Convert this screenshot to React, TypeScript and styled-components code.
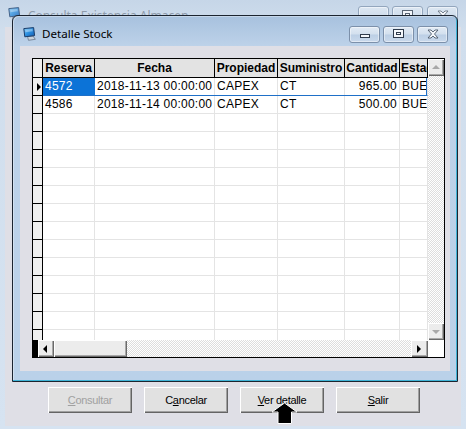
import React from 'react';
import styled, { createGlobalStyle } from 'styled-components';

const GlobalStyle = createGlobalStyle`
  html, body { margin: 0; padding: 0; background: #d3e0ee; }
  #root { width: 466px; height: 429px; }
`;

const Desktop = styled.div`
  position: relative;
  width: 466px;
  height: 429px;
  overflow: hidden;
  font-family: "Liberation Sans", Arial, sans-serif;
`;

/* ---------- background window ---------- */
const BackWindow = styled.div`
  display: flex;
  flex-direction: column;
  width: 100%;
  height: 100%;
  box-sizing: border-box;
  padding: 0 5px 3px 5px;
  background: linear-gradient(to bottom, #c6d6e8 0px, #d0deed 30px, #d6e3f1 100%);
`;

const BackTitleBar = styled.div`
  height: 27px;
  flex-shrink: 0;
  display: flex;
  align-items: flex-start;
  box-sizing: border-box;
  padding: 6px 3px 0 3px;
`;

const BackIcon = styled.div`
  margin-top: 1px;
  width: 13px;
  height: 13px;
  opacity: 0.75;
`;

const BackTitle = styled.div`
  margin-left: 7px;
  margin-top: 2px;
  font-family: "Noto Sans", "Open Sans", sans-serif;
  font-size: 12px;
  line-height: 16px;
  color: #8e9bab;
`;

const CaptionButtons = styled.div<{ $gap: number }>`
  margin-left: auto;
  display: flex;
  gap: ${p => p.$gap}px;
`;

const CaptionButton = styled.div<{ $faded?: boolean }>`
  width: 31px;
  height: 17px;
  box-sizing: border-box;
  border: 1px solid ${p => (p.$faded ? '#93a6bd' : '#7c90aa')};
  border-radius: 3px;
  display: flex;
  align-items: center;
  justify-content: center;
  background: ${p =>
    p.$faded
      ? 'linear-gradient(to bottom, #dde7f2 0%, #d2dfed 50%, #c6d6e8 51%, #cfdcec 100%)'
      : 'linear-gradient(to bottom, #e2ebf5 0%, #d3e0ee 48%, #bccfe5 52%, #c9d9ec 100%)'};
  box-shadow: inset 0 0 0 1px rgba(255, 255, 255, 0.45);
`;

const BackClient = styled.div`
  flex: 1;
  background: #dfdfe6;
  display: flex;
  align-items: flex-end;
  box-sizing: border-box;
  padding: 0 0 13px 43px;
`;

const ButtonRow = styled.div`
  display: flex;
  gap: 12px;
`;

const PushButton = styled.button<{ $disabled?: boolean }>`
  width: 84px;
  height: 26px;
  margin: 0;
  padding: 0 0 1px 0;
  border: none;
  background: #e1e1e1;
  box-shadow: inset 1px 1px 0 #ffffff, inset -1px -1px 0 #646464, inset -2px -2px 0 #a0a0a0;
  font-family: "Liberation Sans", Arial, sans-serif;
  font-size: 11px;
  letter-spacing: -0.3px;
  color: ${p => (p.$disabled ? '#a0a0a0' : '#000')};
  display: flex;
  align-items: center;
  justify-content: center;
  box-sizing: border-box;
  cursor: default;
  u { text-decoration: underline; text-underline-offset: 1px; }
`;

/* ---------- dialog ---------- */
const Dialog = styled.div`
  position: absolute;
  left: 12px;
  top: 15px;
  width: 446px;
  height: 367px;
  box-sizing: border-box;
  border: 1px solid #1b2430;
  border-radius: 6px 6px 0 0;
  padding: 0 7px 10px 7px;
  display: flex;
  flex-direction: column;
  background: linear-gradient(to bottom, #a7c1de 0px, #bdd2e9 30px, #bad1e9 100%);
  box-shadow: inset -1px -1px 0 #3fb3d6, inset 1px 1px 0 rgba(255, 255, 255, 0.35);
`;

const DialogTitleBar = styled.div`
  height: 30px;
  flex-shrink: 0;
  display: flex;
  align-items: center;
  box-sizing: border-box;
  padding: 6px 2px 0 3px;
`;

const DialogIcon = styled.div`
  width: 13px;
  height: 14px;
`;

const DialogTitle = styled.div`
  margin-left: 6px;
  font-family: "Noto Sans", "Open Sans", sans-serif;
  font-size: 11.6px;
  line-height: 16px;
  color: #000;
`;

const DialogClient = styled.div`
  flex: 1;
  background: #dfdfe6;
  box-sizing: border-box;
  padding: 12px 5px 13px 12px;
`;

/* ---------- data grid ---------- */
const DataGrid = styled.div`
  width: 413px;
  height: 300px;
  box-sizing: border-box;
  border: 1px solid #000;
  background: #fff;
  display: grid;
  grid-template-columns: 395px 16px;
  grid-template-rows: 281px 17px;
`;

const Viewport = styled.div`
  overflow: hidden;
`;

const Row = styled.div<{ $header?: boolean; $current?: boolean }>`
  position: relative;
  display: flex;
  width: 100%;
  height: ${p => (p.$header ? 19 : 18)}px;
  overflow: hidden;
  &::after {
    content: '';
    display: ${p => (p.$current ? 'block' : 'none')};
    position: absolute;
    left: 10px;
    top: 0;
    right: 1px;
    bottom: 0;
    border-right: 1px solid #1f70c8;
    border-bottom: 1px solid #1f70c8;
    pointer-events: none;
  }
`;

const Indicator = styled.div`
  flex-shrink: 0;
  width: 10px;
  box-sizing: border-box;
  background: #f0f0f0;
  border-right: 1px solid #000;
  border-bottom: 1px solid #000;
  display: flex;
  align-items: center;
  justify-content: flex-end;
  padding-right: 1px;
`;

const RowMarker = styled.div`
  width: 0;
  height: 0;
  border-left: 4px solid #000;
  border-top: 4.5px solid transparent;
  border-bottom: 4.5px solid transparent;
`;

const HeaderCell = styled.div<{ $w: number; $align?: string }>`
  flex-shrink: 0;
  width: ${p => p.$w}px;
  box-sizing: border-box;
  background: #e3e3e3;
  border-right: 1px solid #000;
  border-bottom: 1px solid #000;
  font-weight: bold;
  font-size: 12px;
  line-height: 18px;
  color: #000;
  text-align: ${p => p.$align || 'center'};
  padding: 0 1px;
  white-space: nowrap;
  overflow: hidden;
`;

const Cell = styled.div<{ $w: number; $align?: string; $selected?: boolean; $current?: boolean }>`
  flex-shrink: 0;
  width: ${p => p.$w}px;
  box-sizing: border-box;
  background: ${p => (p.$selected ? '#0c73d7' : '#fff')};
  color: ${p => (p.$selected ? '#fff' : '#000')};
  border-right: 1px solid ${p => (p.$selected ? '#0c73d7' : '#e4e4e4')};
  border-bottom: 1px solid ${p => (p.$current ? '#1f70c8' : '#e4e4e4')};
  font-size: 12px;
  letter-spacing: 0.25px;
  line-height: 17px;
  text-align: ${p => p.$align || 'left'};
  padding: 0 2px 0 2px;
  white-space: nowrap;
  overflow: hidden;
`;

/* ---------- scrollbars ---------- */
const checker = `repeating-conic-gradient(#ffffff 0% 25%, #dedede 0% 50%) 0 0 / 2px 2px`;

const VScroll = styled.div`
  display: flex;
  flex-direction: column;
  background: ${checker};
`;

const HScroll = styled.div`
  display: flex;
  background: ${checker};
`;

const ScrollBlack = styled.div`
  width: 5px;
  flex-shrink: 0;
  background: #000;
`;

const ScrollButton = styled.div<{ $w: number; $h: number }>`
  width: ${p => p.$w}px;
  height: ${p => p.$h}px;
  flex-shrink: 0;
  box-sizing: border-box;
  background: #ececec;
  box-shadow: inset 1px 1px 0 #ffffff, inset -1px -1px 0 #6a6a6a, inset -2px -2px 0 #a8a8a8;
  display: flex;
  align-items: center;
  justify-content: center;
`;

const Thumb = styled.div`
  width: 73px;
  flex-shrink: 0;
  background: #ececec;
  box-shadow: inset 1px 1px 0 #ffffff, inset -1px -1px 0 #6a6a6a, inset -2px -2px 0 #a8a8a8;
`;

const Track = styled.div`
  flex: 1;
`;

const Corner = styled.div`
  background: #fff;
`;

const Arrow = styled.div<{ $dir: 'left' | 'right' | 'up' | 'down'; $color: string }>`
  width: 0;
  height: 0;
  ${p =>
    p.$dir === 'left'
      ? `border-right: 4px solid ${p.$color}; border-top: 4px solid transparent; border-bottom: 4px solid transparent; margin-right: 2px;`
      : p.$dir === 'right'
      ? `border-left: 4px solid ${p.$color}; border-top: 4px solid transparent; border-bottom: 4px solid transparent; margin-right: 1px;`
      : p.$dir === 'up'
      ? `border-bottom: 4px solid ${p.$color}; border-left: 4px solid transparent; border-right: 4px solid transparent; margin-bottom: 2px;`
      : `border-top: 4px solid ${p.$color}; border-left: 4px solid transparent; border-right: 4px solid transparent; margin-top: 1px;`}
`;

const Cursor = styled.svg`
  position: absolute;
  left: 271px;
  top: 402px;
  pointer-events: none;
`;

/* ---------- icons ---------- */
const MonitorIcon: React.FC = () => (
  <svg width="13" height="14" viewBox="0 0 13 14">
    <defs>
      <linearGradient id="scr" x1="0" y1="0" x2="1" y2="1">
        <stop offset="0" stopColor="#7cc8f5" />
        <stop offset="0.5" stopColor="#2b8fe0" />
        <stop offset="1" stopColor="#145bb0" />
      </linearGradient>
    </defs>
    <path d="M4.5 9.5 L10 9 L12.3 12.3 L5.5 13.3 Z" fill="#c9d2dc" stroke="#69778a" strokeWidth="0.8" />
    <path d="M0.8 1.6 L10.6 0.6 L11.6 8.6 L1.8 9.8 Z" fill="url(#scr)" stroke="#1b3d6a" strokeWidth="1" />
    <path d="M2.2 2.8 L9.4 2 L9.8 4.2 L2.5 5.2 Z" fill="#ffffff" opacity="0.35" />
  </svg>
);

const MinGlyph: React.FC<{ faded?: boolean }> = ({ faded }) => (
  <svg width="12" height="12" viewBox="0 0 12 12">
    {faded ? (
      <rect x="1" y="7" width="10" height="3" fill="#4a5561" />
    ) : (
      <rect x="1.5" y="6.5" width="9" height="3" fill="#f4f7fb" stroke="#2f3b4c" strokeWidth="1" />
    )}
  </svg>
);

const MaxGlyph: React.FC<{ faded?: boolean }> = ({ faded }) => (
  <svg width="12" height="10" viewBox="0 0 12 10">
    <rect x="0.5" y="0.5" width="10" height="8" fill="#f4f7fb" stroke={faded ? '#5a6675' : '#2f3b4c'} strokeWidth="1" />
    <rect x="3.5" y="3.5" width="4" height="2" fill="none" stroke={faded ? '#5a6675' : '#2f3b4c'} strokeWidth="1" />
  </svg>
);

const CloseGlyph: React.FC<{ faded?: boolean }> = ({ faded }) => (
  <svg width="12" height="10" viewBox="0 0 12 10">
    <path
      d="M1 1 L4 1 L6 3 L8 1 L11 1 L7.5 5 L11 9 L8 9 L6 7 L4 9 L1 9 L4.5 5 Z"
      fill="#f4f7fb"
      stroke={faded ? '#6a7684' : '#4d5a6b'}
      strokeWidth="0.9"
      strokeLinejoin="round"
    />
  </svg>
);

/* ---------- data ---------- */
type Col = { title: string; w: number; align?: string; headAlign?: string };
const columns: Col[] = [
  { title: 'Reserva', w: 52 },
  { title: 'Fecha', w: 120 },
  { title: 'Propiedad', w: 63 },
  { title: 'Suministro', w: 67 },
  { title: 'Cantidad', w: 55, align: 'right' },
  { title: 'Estado', w: 28, headAlign: 'left' },
];

const rows: string[][] = [
  ['4572', '2018-11-13 00:00:00', 'CAPEX', 'CT', '965.00', 'BUENO'],
  ['4586', '2018-11-14 00:00:00', 'CAPEX', 'CT', '500.00', 'BUENO'],
];

const TOTAL_ROWS = 15;

export default function App() {
  const bodyRows = Array.from({ length: TOTAL_ROWS }, (_, i) => rows[i] || null);
  return (
    <Desktop>
      <GlobalStyle />
      <BackWindow>
        <BackTitleBar>
          <BackIcon>
            <MonitorIcon />
          </BackIcon>
          <BackTitle>Consulta Existencia Almacen</BackTitle>
          <CaptionButtons $gap={3}>
            <CaptionButton $faded>
              <MinGlyph faded />
            </CaptionButton>
            <CaptionButton $faded>
              <MaxGlyph faded />
            </CaptionButton>
            <CaptionButton $faded style={{ marginLeft: 1 }}>
              <CloseGlyph faded />
            </CaptionButton>
          </CaptionButtons>
        </BackTitleBar>
        <BackClient>
          <ButtonRow>
            <PushButton $disabled>
              <span>
                <u>C</u>onsultar
              </span>
            </PushButton>
            <PushButton>
              <span>
                C<u>a</u>ncelar
              </span>
            </PushButton>
            <PushButton>
              <span>
                <u>V</u>er detalle
              </span>
            </PushButton>
            <PushButton>
              <span>
                <u>S</u>alir
              </span>
            </PushButton>
          </ButtonRow>
        </BackClient>
      </BackWindow>

      <Dialog>
        <DialogTitleBar>
          <DialogIcon>
            <MonitorIcon />
          </DialogIcon>
          <DialogTitle>Detalle Stock</DialogTitle>
          <CaptionButtons $gap={3}>
            <CaptionButton>
              <MinGlyph />
            </CaptionButton>
            <CaptionButton>
              <MaxGlyph />
            </CaptionButton>
            <CaptionButton>
              <CloseGlyph />
            </CaptionButton>
          </CaptionButtons>
        </DialogTitleBar>
        <DialogClient>
          <DataGrid>
            <Viewport>
              <Row $header>
                <Indicator />
                {columns.map(c => (
                  <HeaderCell key={c.title} $w={c.w} $align={c.headAlign}>
                    {c.title}
                  </HeaderCell>
                ))}
              </Row>
              {bodyRows.map((r, i) => (
                <Row key={i} $current={i === 0}>
                  <Indicator>{i === 0 && <RowMarker />}</Indicator>
                  {columns.map((c, j) => (
                    <Cell
                      key={c.title}
                      $w={c.w}
                      $align={c.align}
                      $selected={i === 0 && j === 0}
                      $current={i === 0}
                    >
                      {r ? r[j] : ''}
                    </Cell>
                  ))}
                </Row>
              ))}
            </Viewport>
            <VScroll>
              <ScrollButton $w={16} $h={17}>
                <Arrow $dir="up" $color="#a8a8a8" />
              </ScrollButton>
              <Track />
              <ScrollButton $w={16} $h={17}>
                <Arrow $dir="down" $color="#a8a8a8" />
              </ScrollButton>
            </VScroll>
            <HScroll>
              <ScrollBlack />
              <ScrollButton $w={16} $h={17}>
                <Arrow $dir="left" $color="#000" />
              </ScrollButton>
              <Thumb />
              <Track />
              <ScrollButton $w={17} $h={17}>
                <Arrow $dir="right" $color="#000" />
              </ScrollButton>
            </HScroll>
            <Corner />
          </DataGrid>
        </DialogClient>
      </Dialog>

      <Cursor width="28" height="23" viewBox="0 0 28 23">
        <path
          d="M13.5 1 L26 10 L20.5 10 L20.5 21.5 L7 21.5 L7 10 L1 10 Z"
          fill="#000"
          stroke="#fff"
          strokeWidth="1"
          strokeLinejoin="miter"
        />
      </Cursor>
    </Desktop>
  );
}
